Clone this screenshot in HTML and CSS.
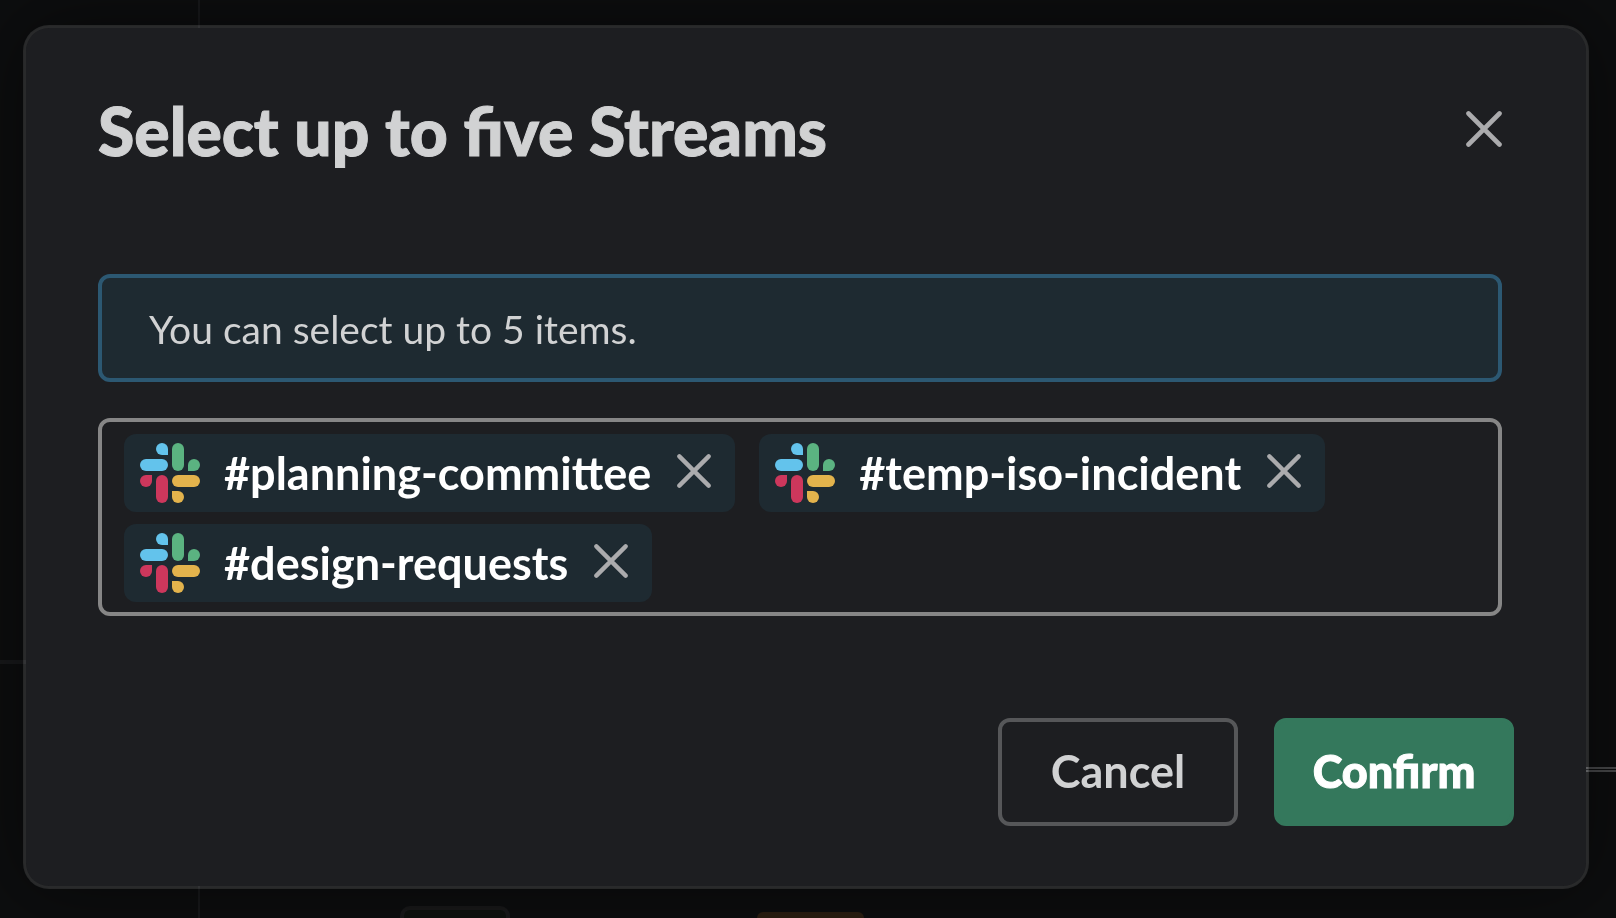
FILE: index.html
```html
<!DOCTYPE html>
<html lang="en">
<head>
    <meta charset="UTF-8">
    <meta name="viewport" content="width=device-width, initial-scale=1.0">
    <title>Select Streams</title>
    <link rel="stylesheet" href="styles.css">
</head>
<body>
    <!-- shared icons -->
    <svg class="sprite" aria-hidden="true">
        <symbol id="slack" viewBox="0 0 60 60">
            <path fill="#63c3ec" d="M22 0a6 6 0 0 1 6 6v6h-6a6 6 0 0 1 0-12z"/>
            <rect fill="#63c3ec" x="0" y="16" width="28" height="12" rx="6"/>
            <rect fill="#5bb381" x="32" y="0" width="12" height="28" rx="6"/>
            <path fill="#5bb381" d="M48 28v-6a6 6 0 1 1 6 6z"/>
            <path fill="#cd375c" d="M12 32v6a6 6 0 1 1-6-6z"/>
            <rect fill="#cd375c" x="16" y="32" width="12" height="28" rx="6"/>
            <rect fill="#e3b34c" x="32" y="32" width="28" height="12" rx="6"/>
            <path fill="#e3b34c" d="M32 48h6a6 6 0 1 1-6 6z"/>
        </symbol>
        <symbol id="close" viewBox="0 0 36 36">
            <path d="M2.5 2.5l31 31M33.5 2.5l-31 31" fill="none" stroke="currentColor" stroke-width="4.6" stroke-linecap="round"/>
        </symbol>
    </svg>

    <div class="page" aria-hidden="true">
        <div class="sidebar">
            <div class="sidebar-top"></div>
            <div class="sidebar-bottom"></div>
        </div>
        <div class="content">
            <div class="content-top"></div>
            <div class="content-bottom">
                <div class="ghost-button"></div>
                <div class="ghost-tag"></div>
            </div>
        </div>
    </div>

    <div class="overlay">
        <div class="dialog" role="dialog" aria-modal="true" aria-labelledby="dialog-title">
            <div class="dialog-header">
                <h1 id="dialog-title">Select up to five Streams</h1>
                <button type="button" class="close-button" aria-label="Close"><svg><use href="#close"/></svg></button>
            </div>

            <div class="dialog-body">
                <p class="notice">You can select up to 5 items.</p>

                <ul class="chips" aria-label="Selected streams">
                    <li class="chip">
                        <svg class="chip-logo"><use href="#slack"/></svg>
                        <span>#planning-committee</span>
                        <button type="button" class="chip-remove" aria-label="Remove #planning-committee"><svg><use href="#close"/></svg></button>
                    </li>
                    <li class="chip">
                        <svg class="chip-logo"><use href="#slack"/></svg>
                        <span>#temp-iso-incident</span>
                        <button type="button" class="chip-remove" aria-label="Remove #temp-iso-incident"><svg><use href="#close"/></svg></button>
                    </li>
                    <li class="chip">
                        <svg class="chip-logo"><use href="#slack"/></svg>
                        <span>#design-requests</span>
                        <button type="button" class="chip-remove" aria-label="Remove #design-requests"><svg><use href="#close"/></svg></button>
                    </li>
                </ul>
            </div>

            <div class="dialog-footer">
                <button type="button" class="button">Cancel</button>
                <button type="button" class="button button-primary">Confirm</button>
            </div>
        </div>
    </div>
</body>
</html>
```

FILE: styles.css
```css
* {
    box-sizing: border-box;
}
body {
    margin: 0;
    min-height: 100vh;
    font-family: Lato, "Liberation Sans", sans-serif;
    background-color: #0d0e0f;
    color: #d1d2d3;
}
button {
    font-family: inherit;
    cursor: pointer;
}
.sprite {
    display: none;
}

/* dimmed page behind the dialog */
.page {
    position: fixed;
    inset: 0;
    display: flex;
}
.sidebar {
    width: 200px;
    border-right: 2px solid #18191b;
    display: flex;
    flex-direction: column;
}
.sidebar-top {
    flex: 1;
    border-bottom: 4px solid #18191b;
}
.sidebar-bottom {
    height: 254px;
}
.content {
    flex: 1;
    display: flex;
    flex-direction: column;
}
.content-top {
    flex: 1;
    border-bottom: 5px double #48494b;
}
.content-bottom {
    height: 146px;
    padding-left: 200px;
    display: flex;
    align-items: flex-end;
    gap: 247px;
    overflow: hidden;
}
.ghost-button {
    width: 110px;
    height: 12px;
    border: 4px solid #19191a;
    border-bottom: none;
    border-radius: 10px 10px 0 0;
    background-color: #0e120e;
}
.ghost-tag {
    width: 107px;
    height: 6px;
    border-radius: 6px 6px 0 0;
    background-color: #2c1f12;
}

/* dialog */
.overlay {
    position: relative;
    min-height: 100vh;
    padding: 25px 27px 29px 23px;
}
.dialog {
    border: 3px solid rgba(232, 232, 232, 0.13);
    border-radius: 26px;
    background-color: #1d1e21;
    background-clip: padding-box;
    box-shadow: 0 0 80px rgba(0, 0, 0, 0.5);
}
.dialog-header {
    display: flex;
    justify-content: space-between;
    align-items: center;
    padding: 60px 84px 0 72px;
}
h1 {
    margin: 0;
    font-size: 66px;
    font-weight: 900;
    line-height: 86px;
    -webkit-text-stroke: 1px currentColor;
}
.close-button {
    display: flex;
    margin-bottom: 4px;
    padding: 0;
    border: none;
    background: none;
    color: #ababad;
}
.close-button svg {
    width: 36px;
    height: 36px;
}
.dialog-body {
    padding: 100px 84px 0 72px;
}
.notice {
    margin: 0 0 36px;
    padding: 23px 47px 21px;
    border: 4px solid #2c5872;
    border-radius: 12px;
    background-color: #1e2a31;
    font-size: 39px;
    line-height: 56px;
}
.chips {
    display: flex;
    flex-wrap: wrap;
    gap: 12px 24px;
    margin: 0;
    padding: 12px 22px 10px;
    border: 4px solid #868686;
    border-radius: 12px;
    list-style: none;
}
.chip {
    display: flex;
    align-items: center;
    height: 78px;
    padding: 0 24px 0 16px;
    border-radius: 12px;
    background-color: #1e2a31;
    color: #fff;
    font-size: 45px;
    font-weight: 700;
}
.chip-logo {
    width: 60px;
    height: 60px;
    margin-right: 24px;
}
.chip-remove {
    display: flex;
    margin: 0 0 4px 26px;
    padding: 0;
    border: none;
    background: none;
    color: #ababad;
}
.chip-remove svg {
    width: 34px;
    height: 34px;
}
.dialog-footer {
    display: flex;
    justify-content: flex-end;
    gap: 36px;
    padding: 102px 72px 60px;
}
.button {
    min-width: 240px;
    height: 108px;
    padding-bottom: 4px;
    border: 4px solid #565759;
    border-radius: 12px;
    background: none;
    color: #d1d2d3;
    font-size: 45px;
    font-weight: 700;
}
.button-primary {
    border-color: #34785c;
    background-color: #34785c;
    color: #fff;
    font-weight: 900;
    -webkit-text-stroke: 1px currentColor;
}
```
